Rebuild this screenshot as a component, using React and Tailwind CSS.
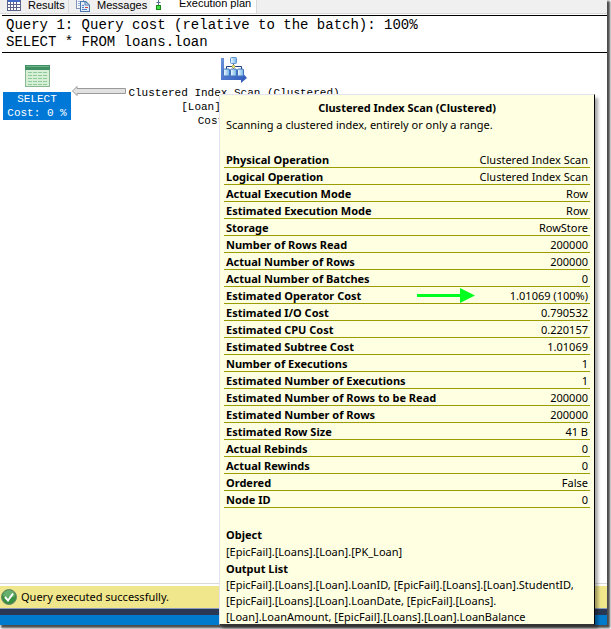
const rows = [
  ['Physical Operation', 'Clustered Index Scan'],
  ['Logical Operation', 'Clustered Index Scan'],
  ['Actual Execution Mode', 'Row'],
  ['Estimated Execution Mode', 'Row'],
  ['Storage', 'RowStore'],
  ['Number of Rows Read', '200000'],
  ['Actual Number of Rows', '200000'],
  ['Actual Number of Batches', '0'],
  ['Estimated Operator Cost', '1.01069 (100%)'],
  ['Estimated I/O Cost', '0.790532'],
  ['Estimated CPU Cost', '0.220157'],
  ['Estimated Subtree Cost', '1.01069'],
  ['Number of Executions', '1'],
  ['Estimated Number of Executions', '1'],
  ['Estimated Number of Rows to be Read', '200000'],
  ['Estimated Number of Rows', '200000'],
  ['Estimated Row Size', '41 B'],
  ['Actual Rebinds', '0'],
  ['Actual Rewinds', '0'],
  ['Ordered', 'False'],
  ['Node ID', '0'],
];

function GridIcon() {
  return (
    <svg width="14" height="11" viewBox="0 0 14 11" className="shrink-0">
      <rect width="14" height="11" fill="#5b6488" />
      <rect x="1" width="12" height="2" fill="#4169c8" />
      {[1, 4, 7, 10].map((x) => [2, 5, 8].map((y) => (
        <rect key={`${x}-${y}`} x={x} y={y} width={x === 10 ? 3 : 2} height="2" fill="#fff" />
      )))}
    </svg>
  );
}

function MessagesIcon() {
  return (
    <svg width="14" height="12" viewBox="0 0 14 12" className="shrink-0">
      <path d="M0 0h8v9H0z" fill="#8494b4" />
      <path d="M1 0h6v8H1z" fill="#f4f7fd" />
      <path d="M2 1.500h3M2 3.500h2M2 5.500h2" stroke="#9fb4da" />
      <path d="M4 1h6l4 4v7H4z" fill="#4a78ac" />
      <path d="M5 2h4l4 3v6H5z" fill="#e4eefb" />
      <path d="M9 1v4h4" stroke="#4a78ac" fill="none" />
      <path d="M6 5.500h2M6 9.500h5" stroke="#4f80c8" />
      <path d="M6 7.500h2" stroke="#4f80c8" />
      <path d="M9 7.500h3" stroke="#d0483c" />
    </svg>
  );
}

function PlanIcon() {
  return (
    <svg width="6" height="10" viewBox="0 0 6 10" className="shrink-0">
      <path d="M2.500 0v5M0.500 2.500h4" stroke="#5a6f8a" fill="none" />
      <rect x="0.5" y="5.5" width="4" height="4" fill="#3fe03f" stroke="#1b8a1b" />
    </svg>
  );
}

function SelectIcon() {
  return (
    <svg width="25" height="22" viewBox="0 0 25 22">
      <rect x="0.5" y="0.5" width="24" height="21" fill="#d6efd6" stroke="#8cb592" />
      <rect width="25" height="5" fill="#3f8f63" />
      <rect x="1" y="1" width="23" height="1" fill="#6fb48c" />
      <path d="M3 7.500h19M3 10.500h19M3 13.500h19M3 16.500h19M3 19.500h19" stroke="#8fca9a" strokeDasharray="4 1" />
    </svg>
  );
}

function ScanIcon() {
  return (
    <svg width="26" height="26" viewBox="0 0 26 26">
      <defs>
        <linearGradient id="bar" x1="0" y1="0" x2="1" y2="1">
          <stop offset="0" stopColor="#6d93dc" />
          <stop offset="1" stopColor="#2d57b8" />
        </linearGradient>
        <linearGradient id="box" x1="0" y1="0" x2="1" y2="0">
          <stop offset="0" stopColor="#f4fbff" />
          <stop offset="1" stopColor="#6fb1e6" />
        </linearGradient>
      </defs>
      <path d="M0 1h3v17h17v-4l6 7-6 5v-3H0z" fill="url(#bar)" />
      <path d="M12.500 7v4M5.500 12v-2.500h15V12" stroke="#1f3f80" fill="none" />
      <rect x="9.500" y="0.500" width="6" height="6" rx="1" fill="url(#box)" stroke="#5d94cf" />
      <rect x="2.500" y="12" width="6" height="7" rx="1" fill="url(#box)" stroke="#3f74bd" />
      <rect x="9.500" y="12" width="6" height="7" rx="1" fill="url(#box)" stroke="#3f74bd" />
      <rect x="16.500" y="12" width="6" height="7" rx="1" fill="url(#box)" stroke="#3f74bd" />
      <path d="M12.500 7.500l2 2-2 2-2-2z" fill="#e8dc6a" stroke="#56603c" strokeWidth="0.5" />
    </svg>
  );
}

function SuccessIcon() {
  return (
    <svg width="16" height="16" viewBox="0 0 16 16" className="shrink-0">
      <circle cx="8" cy="8" r="7.500" fill="#3a8f41" stroke="#6b8a6c" />
      <path d="M2 7a6 6 0 0 1 12 0c-3 2-8 2-12 0z" fill="#86c588" opacity="0.6" />
      <path d="M4 8l3 3.500L12 4.500" stroke="#fff" strokeWidth="2" fill="none" />
    </svg>
  );
}

function Tabs() {
  return (
    <div className="flex h-[14px] items-start overflow-hidden border-b border-[#d9d9d9] bg-[#f0f0f0] font-['Liberation_Sans',sans-serif] text-[11px] leading-[11px] text-black">
      <button className="flex h-[14px] w-[69px] shrink-0 gap-[7px] border-r border-[#d9d9d9] pl-[7px]">
        <GridIcon />
        Results
      </button>
      <button className="flex h-[14px] w-[81px] shrink-0 gap-[7px] pl-[7px]">
        <MessagesIcon />
        Messages
      </button>
      <button className="flex h-[14px] w-[107px] shrink-0 gap-[17px] border-r border-[#d9d9d9] bg-white pl-[6px]">
        <PlanIcon />
        <span className="-mt-0.5 whitespace-nowrap">Execution plan</span>
      </button>
    </div>
  );
}

function Tooltip() {
  return (
    <div className="absolute top-[94px] right-[12px] bottom-0 left-[219px] border-t border-r border-b border-l border-t-[#e3e3ee] border-r-black border-b-[#333] border-l-[#e3e3ee] bg-[#ffffe1] px-1 pt-1 font-['Noto_Sans',sans-serif] text-[11px] leading-[17px] text-black shadow-[3px_4px_3px_rgba(0,0,0,0.35)]">
      <h2 className="text-center font-bold">Clustered Index Scan (Clustered)</h2>
      <p className="px-0.5">Scanning a clustered index, entirely or only a range.</p>
      <table className="mt-[18px] w-full border-separate border-spacing-0">
        <tbody>
          {rows.map(([label, value]) => (
            <tr key={label} className="leading-[15px]">
              <th className="border-b border-[#9c9c00] p-0 pt-px pl-0.5 text-left font-bold whitespace-nowrap">{label}</th>
              <td className="relative border-b border-[#9c9c00] p-0 pt-px pr-0.5 text-right whitespace-nowrap">
                {value}
                {label === 'Estimated Operator Cost' && (
                  <svg width="58" height="15" viewBox="0 0 58 15" className="absolute top-px right-[115px]">
                    <path d="M0 6h43V0l15 7.500L43 15V9H0z" fill="#00ff21" />
                  </svg>
                )}
              </td>
            </tr>
          ))}
        </tbody>
      </table>
      <div className="mt-[18px] px-0.5">
        <h3 className="font-bold">Object</h3>
        <p>[EpicFail].[Loans].[Loan].[PK_Loan]</p>
        <h3 className="font-bold">Output List</h3>
        <p className="leading-4 whitespace-nowrap">
          [EpicFail].[Loans].[Loan].LoanID, [EpicFail].[Loans].[Loan].StudentID,
          <br />
          [EpicFail].[Loans].[Loan].LoanDate, [EpicFail].[Loans].
          <br />
          [Loan].LoanAmount, [EpicFail].[Loans].[Loan].LoanBalance
        </p>
      </div>
    </div>
  );
}

export default function App() {
  return (
    <div className="h-screen overflow-hidden bg-white pr-1 pb-1">
      <div className="relative flex h-full flex-col bg-white shadow-[2px_2px_2px_1px_rgba(0,0,0,0.7)]">
        <Tabs />
        <main className="flex flex-1 flex-col pl-0.5 font-['Liberation_Mono',monospace] text-black">
          <div className="mt-px border-y border-black py-px pl-1 text-sm leading-[17px]">
            <p>Query 1: Query cost (relative to the batch): 100%</p>
            <p>SELECT * FROM loans.loan</p>
          </div>
          <div className="flex items-start pt-1 text-[11px] leading-[14px]">
            <div className="flex w-[70px] flex-col items-center pt-2">
              <SelectIcon />
              <div className="mt-[5px] w-[68px] bg-[#0078d7] text-center text-white">
                <p>SELECT</p>
                <p>Cost: 0 %</p>
              </div>
            </div>
            <svg width="54" height="10" viewBox="0 0 54 10" className="mt-[29px]">
              <path d="M0.500 5L5 0.500V2.500H53.500V7.500H5V9.500z" fill="#e1e1e1" stroke="#9a9a9a" />
            </svg>
            <div className="flex w-[216px] flex-col items-center">
              <ScanIcon />
              <p className="mt-[3px] whitespace-nowrap">Clustered Index Scan (Clustered)</p>
              <p>[Loan].[PK_Loan]</p>
              <p>Cost: 100 %</p>
            </div>
          </div>
        </main>
        <footer className="font-['Noto_Sans',sans-serif] text-[11px] text-black">
          <div className="mb-0.5 border-t border-[#d9d9d9]" />
          <div className="flex h-[22px] items-center gap-1 bg-[#f0e68c] pl-px">
            <SuccessIcon />
            Query executed successfully.
          </div>
          <div className="h-[7px] border-t border-[#8e9bbc] bg-[#293955]" />
          <div className="h-[10px] bg-[#007acc]" />
        </footer>
        <Tooltip />
      </div>
    </div>
  );
}
